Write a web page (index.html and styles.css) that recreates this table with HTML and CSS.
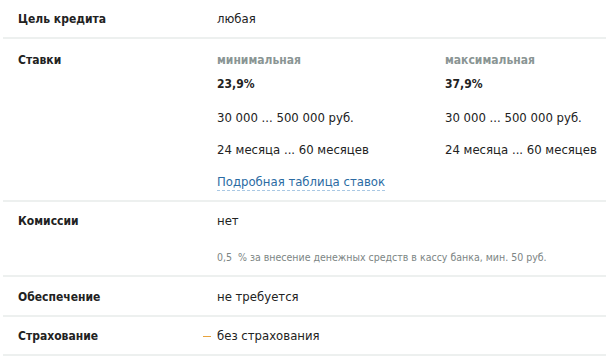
FILE: index.html
```html
<!DOCTYPE html>
<html lang="ru">
<head>
<meta charset="utf-8">
<link rel="stylesheet" href="styles.css">
</head>
<body>
<div class="table">
  <div class="row row-goal">
    <div class="label">Цель кредита</div>
    <div class="value">любая</div>
  </div>
  <div class="row row-rates">
    <div class="label">Ставки</div>
    <div class="value">
      <div class="rates">
        <div class="rate-col">
          <div class="rate-head">минимальная</div>
          <div class="rate-pct">23,9%</div>
          <div class="rate-line">30 000 ... 500 000 руб.</div>
          <div class="rate-line">24 месяца ... 60 месяцев</div>
        </div>
        <div class="rate-col">
          <div class="rate-head">максимальная</div>
          <div class="rate-pct">37,9%</div>
          <div class="rate-line">30 000 ... 500 000 руб.</div>
          <div class="rate-line">24 месяца ... 60 месяцев</div>
        </div>
      </div>
      <a class="rate-link" href="#">Подробная таблица ставок</a>
    </div>
  </div>
  <div class="row row-fees">
    <div class="label">Комиссии</div>
    <div class="value">
      <div>нет</div>
      <div class="note">0,5 &nbsp;% за внесение денежных средств в кассу банка, мин. 50 руб.</div>
    </div>
  </div>
  <div class="row row-secure">
    <div class="label">Обеспечение</div>
    <div class="value">не требуется</div>
  </div>
  <div class="row row-insure">
    <div class="label">Страхование</div>
    <div class="value value-dash"><span class="dash"></span>без страхования</div>
  </div>
</div>
</body>
</html>
```

FILE: styles.css
```css
html, body {
  margin: 0;
  padding: 0;
  background: #ffffff;
}
body {
  font-family: "DejaVu Sans Condensed", "Liberation Sans Narrow", "Liberation Sans", sans-serif;
  font-size: 13px;
  line-height: 16px;
  color: #222222;
}
.table {
  margin-left: 3px;
}
.row {
  display: flex;
  border-bottom: 2px solid #edf0ef;
  padding-left: 15px;
  box-sizing: content-box;
}
.row-goal {
  padding-top: 11px;
  height: 26px;
}
.label {
  width: 199px;
  font-size: 12px;
  font-weight: bold;
  flex: none;
}
.value {
  flex: 1;
  min-width: 0;
}
.row-rates {
  padding-top: 13px;
  height: 148px;
}
.rates {
  display: grid;
  grid-template-columns: 228px auto;
}
.rate-head {
  color: #8a9594;
  font-size: 12px;
  font-weight: bold;
  height: 24px;
}
.rate-pct {
  font-size: 12px;
  font-weight: bold;
  height: 34px;
}
.rate-line {
  height: 32px;
  white-space: nowrap;
}
.rate-amount {
  font-size: 12.5px;
}
.rate-link {
  display: inline-block;
  color: #2b6ba3;
  text-decoration: none;
  border-bottom: 1px dashed #a9c8e4;
  line-height: 16px;
}
.row-fees {
  padding-top: 11px;
  height: 62px;
}
.note {
  margin-top: 21px;
  font-size: 10.5px;
  line-height: 14px;
  color: #7c8584;
}
.row-secure {
  padding-top: 12px;
  height: 26px;
}
.row-insure {
  padding-top: 11px;
  height: 26px;
}
.value-dash {
  position: relative;
}
.dash {
  position: absolute;
  left: -14px;
  top: 8px;
  width: 8px;
  height: 1px;
  background: #e8a33d;
}
```
